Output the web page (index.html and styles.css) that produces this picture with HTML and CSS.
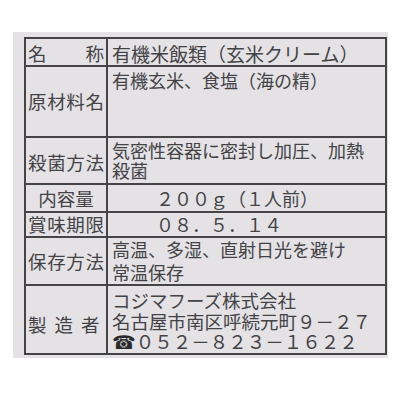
FILE: index.html
```html
<!DOCTYPE html>
<html lang="ja">
<head>
<meta charset="utf-8">
<link rel="stylesheet" href="styles.css">
</head>
<body>
<div class="panel">
  <div class="label">
    <div class="k just r1k">名称</div>
    <div class="v r1v">有機米飯類（玄米クリーム）</div>

    <div class="k just mid">原材料名</div>
    <div class="v r2v">有機玄米、食塩（海の精）</div>

    <div class="k just mid r3k">殺菌方法</div>
    <div class="v r3v">気密性容器に密封し加圧、加熱<br>殺菌</div>

    <div class="k center mid">内容量</div>
    <div class="v mid indent">２００ｇ（１人前）</div>

    <div class="k just mid">賞味期限</div>
    <div class="v mid indent">０８．５．１４</div>

    <div class="k just mid">保存方法</div>
    <div class="v r6v">高温、多湿、直射日光を避け<br>常温保存</div>

    <div class="k spaced r7k">製造者</div>
    <div class="v r7v">コジマフーズ株式会社<br>名古屋市南区呼続元町９－２７<br><span class="tel">☎</span>０５２－８２３－１６２２</div>
  </div>
</div>
</body>
</html>
```

FILE: styles.css
```css
html, body {
  margin: 0;
  padding: 0;
  background: #ffffff;
}

body {
  font-family: "Noto Sans CJK JP", "Noto Sans", sans-serif;
  color: #434245;
}

.panel {
  box-sizing: border-box;
  margin: 32px 0 0 13px;
  width: 375px;
  height: 326px;
  padding: 5px 0 0 11px;
  background: #e4e2e5;
}

.label {
  display: grid;
  grid-template-columns: 80px 277px;
  grid-template-rows: 26px 69px 45px 26px 23px 46px 67px;
  gap: 2px;
  width: fit-content;
  background: #454446;
  border: 2px solid #454446;
}

.k,
.v {
  background: #e4e2e5;
  font-size: 18px;
  line-height: 21px;
  white-space: nowrap;
}

.k {
  padding: 0 2px;
  font-size: 18.5px;
}

.v {
  padding: 0 0 0 4px;
}

.mid {
  display: flex;
  flex-direction: column;
  justify-content: center;
}

.just {
  text-align: justify;
  text-align-last: justify;
}

.center {
  text-align: center;
}

.r1k,
.r1v {
  padding-top: 4px;
  line-height: 21px;
}

.r1v {
  font-size: 19px;
}

.r3k {
  padding-top: 4px;
}

.r2v {
  padding-top: 2.5px;
}

.r3v {
  padding-top: 3px;
  line-height: 19.5px;
}

.indent {
  padding-left: 48px;
}

.r6v {
  padding-top: 0;
  line-height: 23px;
}

.r7k {
  padding-top: 28px;
  letter-spacing: 8px;
}

.r7v {
  padding-top: 4px;
  font-size: 18.5px;
  line-height: 20.5px;
}

.tel {
  font-family: "DejaVu Sans", sans-serif;
  font-size: 19px;
  color: #2a2a2a;
}
```
